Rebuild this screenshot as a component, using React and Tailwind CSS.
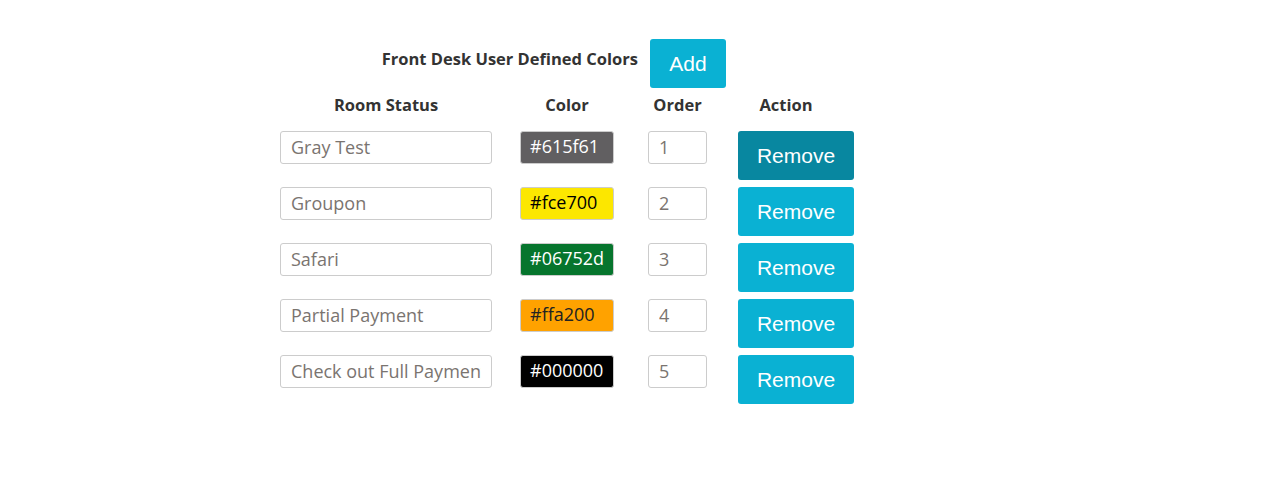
import React from 'react';

const rows = [
  { status: 'Gray Test', color: '#615f61', text: 'text-white', order: 1 },
  { status: 'Groupon', color: '#fce700', text: 'text-black', order: 2 },
  { status: 'Safari', color: '#06752d', text: 'text-white', order: 3 },
  { status: 'Partial Payment', color: '#ffa200', text: 'text-[#222]', order: 4 },
  { status: 'Check out Full Payment', color: '#000000', text: 'text-white', order: 5 },
];

const App = () => {
  return (
    <div className="min-h-screen bg-white font-['Open_Sans',sans-serif] text-[#333]">
      <div className="pl-[280px] pt-[39px]">
        {/* Title row */}
        <div className="flex items-start">
          <div className="w-[358px] pt-[9px] text-right text-[16.5px] font-bold leading-[22px]">
            Front Desk User Defined Colors
          </div>
          <button className="ml-[12px] h-[49px] w-[76px] rounded-[3px] bg-[#0ab1d3] font-['Liberation_Sans',Arial,sans-serif] text-[21px] text-white">
            Add
          </button>
        </div>

        {/* Header row */}
        <div className="mt-[6px] flex text-[16.5px] font-bold leading-[22px]">
          <div className="w-[212px] text-center">Room Status</div>
          <div className="ml-[28px] w-[94px] text-center">Color</div>
          <div className="ml-[34px] w-[59px] text-center">Order</div>
          <div className="ml-[31px] w-[116px] pr-[20px] text-center">Action</div>
        </div>

        {/* Rows */}
        <div className="mt-[15px] flex flex-col gap-[7px]">
          {rows.map((r, i) => (
            <div key={r.order} className="flex items-start">
              <input
                readOnly
                value={r.status}
                className="h-[33px] w-[212px] rounded-[3px] border border-[#ccc] px-[10px] pb-[2px] text-[18px] text-[#7a7470] outline-none"
              />
              <div
                className={`ml-[28px] flex h-[33px] w-[94px] items-center rounded-[3px] border border-[#ccc] pb-[2px] pl-[9px] text-[18px] ${r.text}`}
                style={{ backgroundColor: r.color }}
              >
                {r.color}
              </div>
              <input
                readOnly
                value={r.order}
                className="ml-[34px] h-[33px] w-[59px] rounded-[3px] border border-[#ccc] px-[10px] pb-[2px] text-[18px] text-[#7a7470] outline-none"
              />
              <button
                className={`ml-[31px] h-[49px] w-[116px] rounded-[3px] font-['Liberation_Sans',Arial,sans-serif] text-[21px] text-white ${
                  i === 0 ? 'bg-[#0887a0]' : 'bg-[#0ab1d3]'
                }`}
              >
                Remove
              </button>
            </div>
          ))}
        </div>
      </div>
    </div>
  );
};

export default App;
